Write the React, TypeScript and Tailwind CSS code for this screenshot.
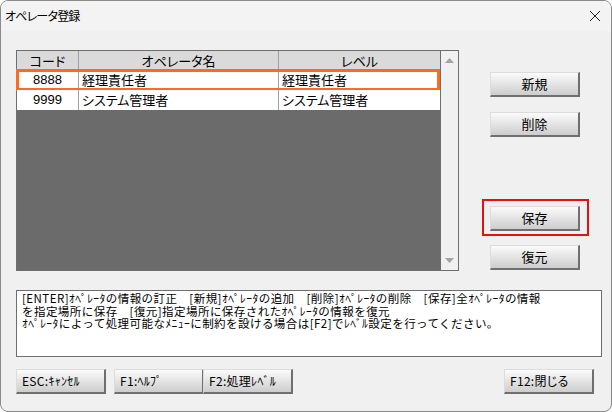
import React from "react";

const btn =
  "h-[25px] bg-gradient-to-b from-[#fbfbfb] to-[#cdcdcd] border-t border-l border-[#dcdcdc] border-b-2 border-r-2 border-b-[#6f6f6f] border-r-[#6f6f6f] text-black";

function SideButton({ label }: { label: string }) {
  return <div className={`${btn} w-[90px] flex items-center justify-center text-[13px]`}>{label}</div>;
}

function FnButton({ label, className = "" }: { label: string; className?: string }) {
  return (
    <div className={`${btn} w-[90px] flex items-center pl-[5px] text-[12px] tracking-[0.3px] ${className}`}>{label}</div>
  );
}

export default function App() {
  const rows = [
    { code: "8888", name: "経理責任者", level: "経理責任者" },
    { code: "9999", name: "システム管理者", level: "システム管理者" },
  ];

  return (
    <div className="w-[612px] h-[412px] bg-[#f0f0f0] border border-[#8a8a8a] rounded-[8px] overflow-hidden flex flex-col font-['Noto_Sans_CJK_JP',sans-serif] [font-feature-settings:'palt'] text-black">
      {/* title bar */}
      <div className="h-[30px] shrink-0 bg-[#f3f3f3] flex items-center justify-between pl-[4px] pr-[8px]">
        <span className="text-[12px] tracking-[-0.8px]">オペレータ登録</span>
        <svg width="12" height="12" viewBox="0 0 12 12" className="mr-[2px]">
          <path d="M1 1 L11 11 M11 1 L1 11" stroke="#222" strokeWidth="1" />
        </svg>
      </div>

      <div className="flex-1 pl-[15px] pt-[19px]">
        <div className="flex">
          {/* grid */}
          <div className="w-[443px] h-[221px] border border-[#6e6e6e] flex">
            <div className="flex-1 bg-[#6b6b6b] relative">
              <div className="h-[19px] bg-[#dadada] flex text-[13px] leading-[19px]">
                <div className="w-[62px] border-r border-[#a0a0a0] text-center">コード</div>
                <div className="w-[200px] border-r border-[#a0a0a0] text-center">オペレータ名</div>
                <div className="flex-1 text-center">レベル</div>
              </div>
              {rows.map((r, i) => (
                <div key={r.code} className="h-[20px] bg-white flex text-[13px] leading-[20px] relative">
                  <div className="w-[62px] border-r border-[#a0a0a0] text-center font-['Liberation_Sans',sans-serif]">
                    {r.code}
                  </div>
                  <div className="w-[200px] border-r border-[#a0a0a0] pl-[3px]">{r.name}</div>
                  <div className="flex-1 pl-[3px]">{r.level}</div>
                  {i === 0 && (
                    <div className="absolute -left-[1px] right-0 -top-[1px] h-[22px] border-[3px] border-[#ff6a22]" />
                  )}
                </div>
              ))}
            </div>
            <div className="w-[18px] border-l border-[#6e6e6e] bg-[#f0f0f0] flex flex-col justify-between items-center py-[7px]">
              <svg width="9" height="5" viewBox="0 0 9 5">
                <path d="M4.5 0 L9 5 L0 5 Z" fill="#a3a3a3" />
              </svg>
              <svg width="9" height="5" viewBox="0 0 9 5">
                <path d="M0 0 L9 0 L4.5 5 Z" fill="#a3a3a3" />
              </svg>
            </div>
          </div>

          {/* side buttons */}
          <div className="ml-[31px] flex flex-col">
            <div className="mt-[22px]">
              <SideButton label="新規" />
            </div>
            <div className="mt-[15px]">
              <SideButton label="削除" />
            </div>
            <div className="mt-[62px] -ml-[8px] w-[107px] border-2 border-[#e61010] pt-[5px] pb-[3px] pl-[6px]">
              <SideButton label="保存" />
            </div>
            <div className="mt-[9px]">
              <SideButton label="復元" />
            </div>
          </div>
        </div>

        {/* message */}
        <div className="mt-[19px] w-[586px] h-[67px] bg-white border border-[#6e6e6e] pl-[5px] pt-[1px] text-[11.5px] leading-[12.5px] tracking-[0.45px] whitespace-pre [font-feature-settings:normal]">
          <div>[ENTER]ｵﾍﾟﾚｰﾀの情報の訂正　[新規]ｵﾍﾟﾚｰﾀの追加　[削除]ｵﾍﾟﾚｰﾀの削除　[保存]全ｵﾍﾟﾚｰﾀの情報</div>
          <div>を指定場所に保存　[復元]指定場所に保存されたｵﾍﾟﾚｰﾀの情報を復元</div>
          <div>ｵﾍﾟﾚｰﾀによって処理可能なﾒﾆｭｰに制約を設ける場合は[F2]でﾚﾍﾞﾙ設定を行ってください。</div>
        </div>

        {/* function keys */}
        <div className="mt-[12px] flex">
          <FnButton label="ESC:ｷｬﾝｾﾙ" />
          <FnButton label="F1:ﾍﾙﾌﾟ" className="ml-[8px]" />
          <FnButton label="F2:処理ﾚﾍﾞﾙ" className="-ml-[1px]" />
          <FnButton label="F12:閉じる" className="ml-[211px]" />
        </div>
      </div>
    </div>
  );
}
